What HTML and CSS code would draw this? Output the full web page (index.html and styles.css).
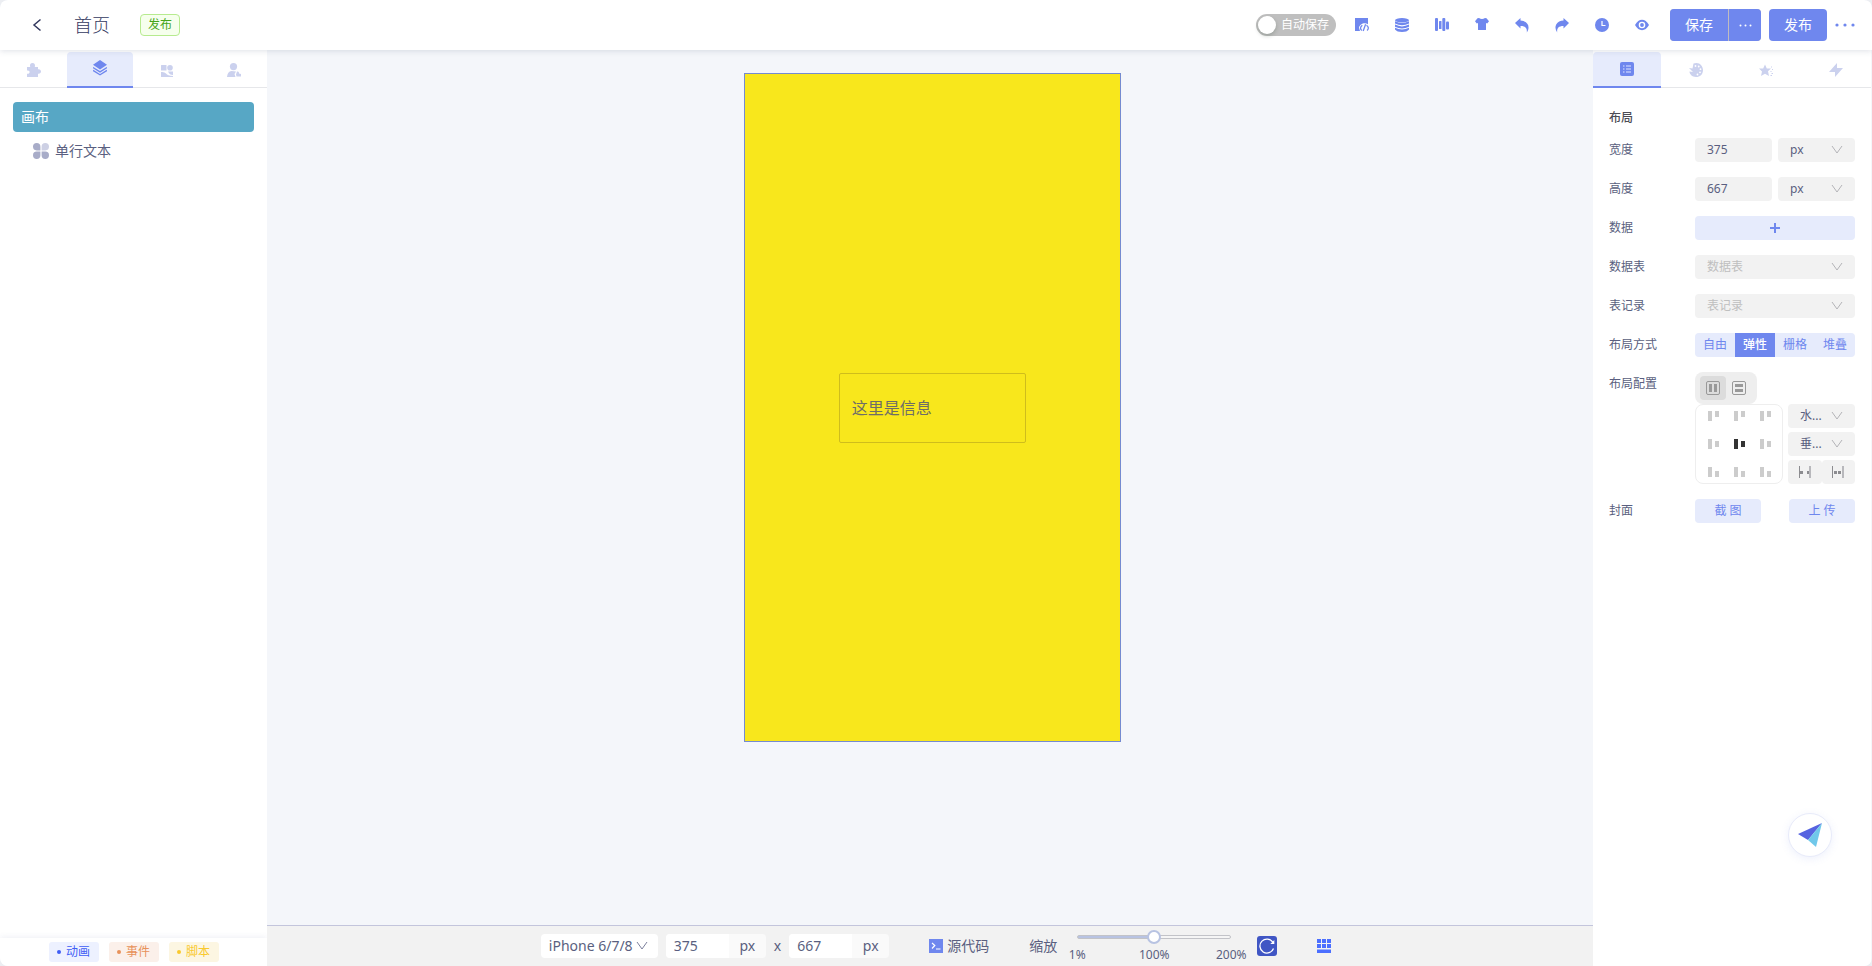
FILE: index.html
```html
<!DOCTYPE html>
<html lang="zh-CN">
<head>
<meta charset="utf-8">
<title>首页</title>
<link rel="stylesheet" href="styles.css">
</head>
<body>
<svg class="defs" aria-hidden="true">
  <symbol id="chevron" viewBox="0 0 12 12"><path d="M1 2 6 9l5-7" fill="none" stroke="currentColor"/></symbol>
</svg>
<div class="app">
  <header class="topbar">
    <button class="plain back" aria-label="返回"><svg width="10" height="14" viewBox="0 0 10 14"><path d="M8.500 1.500 2 7l6.500 5.500" fill="none" stroke="currentColor" stroke-width="1.500"/></svg></button>
    <h1 class="title">首页</h1>
    <span class="badge">发布</span>
    <div class="tools">
      <label class="switch"><input type="checkbox" role="switch"><span>自动保存</span></label>
      <button class="plain" aria-label="页面代码"><svg class="ico" viewBox="0 0 14 14"><path d="M0 0h13v6.200C9.500 4 4.500 6 4 9.800L5 13H0z"/><path d="M7.300 7.300Q4 10 6.800 12.600M10.600 6.300 8.200 13M11.500 7.300q3.400 2.500.6 5.200" fill="none" stroke="currentColor" stroke-width="1.300"/></svg></button>
      <button class="plain" aria-label="数据库"><svg class="ico" viewBox="0 0 14 14"><ellipse cx="7" cy="2.200" rx="7" ry="2.200"/><path d="M0 3.300q7 3.600 14 0v2.200q-7 3.600-14 0zM0 6.600q7 3.600 14 0v2.100q-7 3.600-14 0zM0 9.800q7 3.600 14 0v1.700q-2 2.500-7 2.500t-7-2.500z"/></svg></button>
      <button class="plain" aria-label="变量"><svg class="ico" viewBox="0 0 14 14"><rect width="3" height="13" rx="1"/><rect x="4" y="3" width="2.500" height="8" rx=".6"/><rect x="7.300" y="0" width="3" height="13" rx="1"/><rect x="11" y="3.500" width="3" height="8" rx="1"/></svg></button>
      <button class="plain" aria-label="主题"><svg class="ico" viewBox="0 0 14 14"><path d="M4 0q3 2 6 0l1.500.3L14 3.200 12.200 5.500 11 5v6.500q0 .5-.6.500H3.600q-.6 0-.6-.5V5l-1.200.5L0 3.200 2.500.3z"/></svg></button>
      <button class="plain" aria-label="撤销"><svg class="ico" viewBox="0 0 14 14"><path d="M0 5 5.500 0v2.600C12 3 16 8 11.800 14.500c.5-4.500-1.500-6.500-6.300-6.500v2.500z"/></svg></button>
      <button class="plain" aria-label="重做"><svg class="ico" viewBox="0 0 14 14"><path d="M14 5 8.500 0v2.600C2 3-2 8 2.200 14.500 1.700 10 3.700 8 8.500 8v2.500z"/></svg></button>
      <button class="plain" aria-label="历史"><svg class="ico" viewBox="0 0 14 14"><circle cx="7" cy="7" r="7"/><path d="M7 3v4.500h3.500" fill="none" stroke="#fff" stroke-width="1.200"/></svg></button>
      <button class="plain" aria-label="预览"><svg class="ico" viewBox="0 0 14 14"><path d="M0 7Q3 1.800 7 1.800T14 7Q11 12.200 7 12.200T0 7z"/><circle cx="7" cy="7" r="2.600" fill="none" stroke="#fff" stroke-width="1.400"/></svg></button>
    </div>
    <div class="actions">
      <div class="split"><button class="primary">保存</button><button class="primary more" aria-label="更多保存方式"><svg width="13" height="3" viewBox="0 0 13 3"><circle cx="1.500" cy="1.500" r="1"/><circle cx="6.500" cy="1.500" r="1"/><circle cx="11.500" cy="1.500" r="1"/></svg></button></div>
      <button class="primary">发布</button>
      <button class="plain" aria-label="更多"><svg width="20" height="4" viewBox="0 0 20 4"><circle cx="2" cy="2" r="1.600"/><circle cx="10" cy="2" r="1.600"/><circle cx="18" cy="2" r="1.600"/></svg></button>
    </div>
  </header>

  <aside class="side">
    <nav class="tabs">
      <button class="tab" aria-label="组件"><svg class="ico" viewBox="0 0 14 14"><path d="M0 4h3.200C2.400 1.500 3.700 0 5.500 0s3.100 1.500 2.300 4H11v2.300c1.800-.4 3 .8 3 2.200s-1.200 2.600-3 2.200V14H0v-3.300c3.500.6 3.500-4 0-3.200z"/></svg></button>
      <button class="tab active" aria-label="图层"><svg width="14" height="16" viewBox="0 0 14 16"><path d="M7 0l7 4.700-7 4.700L0 4.700z"/><path d="M0 7.600l7 4.300 7-4.300M0 10.400l7 4.300 7-4.300" fill="none" stroke="currentColor" stroke-width="1.300"/></svg></button>
      <button class="tab" aria-label="素材"><svg class="ico" viewBox="0 0 14 14"><rect x="1" y="2" width="5.500" height="5.500" rx=".5"/><circle cx="10" cy="4.700" r="2.800"/><path d="M1 9q3.500-.5 5 1.500T13 13v1H1zM8 8.500h5v3.500Q9.500 12 8 8.500z"/></svg></button>
      <button class="tab" aria-label="用户"><svg class="ico" viewBox="0 0 14 14"><circle cx="6.500" cy="3.600" r="3.600"/><path d="M0 14Q.5 8.500 4.500 8L9 8.500 7.500 11l1 3zM10 8.500q2.300-.5 2 2l2 .5v2.500h-4.500l-.5-2z"/></svg></button>
    </nav>
    <ul class="tree">
      <li><button class="node root">画布</button></li>
      <li><button class="node child"><svg width="16" height="16" viewBox="0 0 16 16"><path d="M3.700 0A3.700 3.700 0 1 0 3.700 7.400H7.400V3.700A3.700 3.700 0 0 0 3.700 0zM3.700 8.600a3.700 3.700 0 1 0 3.700 3.700V8.600zM8.600 8.600v3.700a3.700 3.700 0 1 0 3.700-3.700z" fill="#a8acc8"/><path d="M12.300 0a3.700 3.700 0 0 0-3.700 3.700v3.700h3.700a3.700 3.700 0 1 0 0-7.400z" fill="#cdd0e4"/></svg>单行文本</button></li>
    </ul>
    <footer class="tags"><span class="tag anim">动画</span><span class="tag event">事件</span><span class="tag script">脚本</span></footer>
  </aside>

  <main class="stage">
    <div class="viewport"><div class="phone"><div class="textbox">这里是信息</div></div></div>
    <footer class="status">
      <div class="select device"><select aria-label="设备"><option>iPhone 6/7/8</option></select><svg><use href="#chevron"/></svg></div>
      <div class="dims">
        <label class="unit"><input type="text" value="375" aria-label="画布宽度"><span>px</span></label>
        <span>x</span>
        <label class="unit"><input type="text" value="667" aria-label="画布高度"><span>px</span></label>
      </div>
      <button class="plain source"><svg width="14" height="14" viewBox="0 0 14 14"><rect width="14" height="14" fill="#6f87ee"/><path d="M3 4l2.800 2.500L3 9.500M7 10h4.500" fill="none" stroke="#fff" stroke-width="1.200"/></svg>源代码</button>
      <div class="zoom">
        <label for="zoom">缩放</label>
        <div class="slider"><input id="zoom" type="range" min="1" max="200" value="100"><div class="marks"><span>1%</span><span>100%</span><span>200%</span></div></div>
      </div>
      <button class="plain reset" aria-label="重置缩放"><svg width="20" height="20" viewBox="0 0 20 20"><rect width="20" height="20" rx="3" fill="#4056c4"/><path d="M15.800 6.200A7 7 0 1 0 16.500 12.500" fill="none" stroke="#fff" stroke-width="1.300"/><path d="M17.300 4v4h-4z" fill="#fff"/></svg></button>
      <button class="plain grid" aria-label="网格"><svg width="14" height="14" viewBox="0 0 14 14"><path d="M0 0h4v4H0zM5 0h4v4H5zM10 0h4v4h-4zM0 5h4v4H0zM5 5h4v4H5zM10 5h4v4h-4zM0 10.500h14V14H0z"/></svg></button>
    </footer>
  </main>

  <aside class="props">
    <nav class="tabs">
      <button class="tab active" aria-label="属性"><svg class="ico" viewBox="0 0 14 14"><rect width="14" height="14" rx="2"/><path d="M3 4h1.500M3 7h1.500M3 10h1.500M6 4h5M6 7h5M6 10h5" stroke="#dfe5ff" stroke-width="1.100"/></svg></button>
      <button class="tab" aria-label="样式"><svg class="ico" viewBox="0 0 14 14"><path d="M4.500.5C10-1.500 14 2.500 14 7s-3 7-7 7-6.500-3-6.500-5.500L4 9 0 5l3.500.5z"/><g fill="#fff"><circle cx="6.500" cy="3" r=".9"/><circle cx="9.700" cy="3.500" r=".9"/><circle cx="11.500" cy="6.200" r=".9"/><circle cx="11" cy="9.300" r=".9"/><circle cx="8.500" cy="11.500" r=".9"/></g></svg></button>
      <button class="tab" aria-label="动画"><svg class="ico" viewBox="0 0 14 14"><path d="M6 1.500l1.800 4H12L9 8.300l1 4.700-4-2.300L2 13l1-4.500L0 5.500h4.200z"/><path d="M12 4h1M13 6.500h1M11.500 8.500h1M12.500 10.500H14M11.500 12.500H13" stroke="currentColor"/></svg></button>
      <button class="tab" aria-label="事件"><svg class="ico" viewBox="0 0 14 14"><path d="M8 0v5h6L6 14V9H0z"/></svg></button>
    </nav>
    <form class="form">
      <h2>布局</h2>
      <div class="row"><label for="w">宽度</label><div class="pair"><input id="w" class="field" type="text" value="375"><div class="select"><select aria-label="宽度单位"><option>px</option></select><svg><use href="#chevron"/></svg></div></div></div>
      <div class="row"><label for="h">高度</label><div class="pair"><input id="h" class="field" type="text" value="667"><div class="select"><select aria-label="高度单位"><option>px</option></select><svg><use href="#chevron"/></svg></div></div></div>
      <div class="row"><span>数据</span><button type="button" class="soft" aria-label="添加数据"><svg width="10" height="10" viewBox="0 0 10 10"><path d="M5 0v10M0 5h10" stroke="currentColor" stroke-width="2"/></svg></button></div>
      <div class="row"><label for="table">数据表</label><div class="select empty"><select id="table"><option>数据表</option></select><svg><use href="#chevron"/></svg></div></div>
      <div class="row"><label for="record">表记录</label><div class="select empty"><select id="record"><option>表记录</option></select><svg><use href="#chevron"/></svg></div></div>
      <div class="row"><span>布局方式</span><div class="segments"><button type="button">自由</button><button type="button" class="on">弹性</button><button type="button">栅格</button><button type="button">堆叠</button></div></div>
      <div class="row"><span>布局配置</span>
        <div class="config">
          <div class="direction">
            <button type="button" class="on" aria-label="横向"><svg width="14" height="14" viewBox="0 0 14 14"><rect x=".5" y=".5" width="13" height="13" rx="1.500"/><path d="M3 3h3v8H3zM8 3h3v8H8z"/></svg></button>
            <button type="button" aria-label="纵向"><svg width="14" height="14" viewBox="0 0 14 14"><rect x=".5" y=".5" width="13" height="13" rx="1.500"/><path d="M3 3h8v3H3zM3 8h8v3H3z"/></svg></button>
          </div>
          <div class="align">
            <div class="matrix">
              <button type="button" class="top" aria-label="左上"><i></i><i></i></button><button type="button" class="top" aria-label="上"><i></i><i></i></button><button type="button" class="top" aria-label="右上"><i></i><i></i></button>
              <button type="button" aria-label="左"><i></i><i></i></button><button type="button" class="on" aria-label="居中"><i></i><i></i></button><button type="button" aria-label="右"><i></i><i></i></button>
              <button type="button" class="bottom" aria-label="左下"><i></i><i></i></button><button type="button" class="bottom" aria-label="下"><i></i><i></i></button><button type="button" class="bottom" aria-label="右下"><i></i><i></i></button>
            </div>
            <div class="stack">
              <div class="select"><select aria-label="水平对齐"><option>水...</option></select><svg><use href="#chevron"/></svg></div>
              <div class="select"><select aria-label="垂直对齐"><option>垂...</option></select><svg><use href="#chevron"/></svg></div>
              <div class="spread">
                <button type="button" aria-label="两端分布"><svg width="12" height="12" viewBox="0 0 12 12"><path d="M0 0h1v12H0zM1 5h3v3H1zM8 5h3v3H8z" fill="#8c8c90"/><path d="M10 0h2v12h-2z" fill="#b8b8bc"/></svg></button>
                <button type="button" aria-label="平均分布"><svg width="12" height="12" viewBox="0 0 12 12"><path d="M0 0h1v12H0zM2 5h3v3H2zM6 5h3v3H6z" fill="#8c8c90"/><path d="M10 0h2v12h-2z" fill="#b8b8bc"/></svg></button>
              </div>
            </div>
          </div>
        </div>
      </div>
      <div class="row"><span>封面</span><div class="cover"><button type="button" class="soft">截 图</button><button type="button" class="soft">上 传</button></div></div>
    </form>
    <button class="assistant" aria-label="助手"><svg width="24" height="24" viewBox="0 0 24 24"><path d="M24 0 0 11l10 6z" fill="#5663e0"/><path d="M24 0 10 17l8 7z" fill="#70c8ea"/></svg></button>
  </aside>
</div>
</body>
</html>
```
FILE: styles.css
```css
* { box-sizing: border-box; }

body {
  margin: 0;
  background: #eceef2;
  color: #5a5f80;
  font: 12px/20px "Noto Sans", "Noto Sans CJK SC", sans-serif;
}

button, input, select { font: inherit; color: inherit; border: 0; margin: 0; padding: 0; background: none; }
button { display: flex; align-items: center; justify-content: center; cursor: pointer; }
select { appearance: none; width: 100%; }
input { min-width: 0; }
svg { display: block; fill: currentColor; flex: none; }
h1, h2, ul { margin: 0; padding: 0; list-style: none; }
.defs { display: none; }
.ico { width: 14px; height: 14px; overflow: visible; }

.app {
  display: grid;
  grid-template: 50px 1fr / 267px 1fr 278px;
  height: 100vh;
  padding-right: 1px;
  border-radius: 8px;
  overflow: hidden;
  background: #f4f6fa;
}

.topbar {
  grid-column: 1 / -1;
  display: flex;
  align-items: center;
  margin-right: -1px;
  padding: 0 17px 0 32px;
  background: #fff;
  box-shadow: 0 1px 6px rgba(80, 90, 120, .18);
  z-index: 1;
}
.back { color: #33395f; }
.title { margin-left: 32px; font-size: 18px; font-weight: 300; color: #33395f; }
.badge {
  margin-left: 30px;
  padding: 0 7px;
  border: 1px solid #b7eb8f;
  border-radius: 4px;
  background: #f6ffed;
  color: #45a51a;
}
.tools { display: flex; align-items: center; gap: 26px; margin-left: auto; color: #6f87ee; }
.switch {
  position: relative;
  width: 80px;
  height: 22px;
  margin-right: -7px;
  padding-left: 25px;
  border-radius: 11px;
  background: #bfbfbf;
  color: #fff;
  line-height: 22px;
}
.switch input {
  appearance: none;
  position: absolute;
  top: 2px;
  left: 2px;
  width: 18px;
  height: 18px;
  border-radius: 50%;
  background: #fff;
  box-shadow: 0 2px 4px rgba(0, 35, 11, .2);
}
.actions { display: flex; align-items: center; gap: 8px; margin-left: 21px; color: #6f87ee; }
.split { display: flex; gap: 1px; background: #c0bcc0; border-radius: 4px; overflow: hidden; }
.primary { width: 58px; height: 32px; border-radius: 4px; background: #6f87ee; color: #fff; font-size: 14px; }
.split .primary { border-radius: 0; }
.split .more { width: 32px; }

.side, .props { display: flex; flex-direction: column; background: #fff; min-height: 0; }
.tabs { display: grid; grid-template-columns: 67px 66px 1fr 1fr; height: 38px; padding-top: 2px; border-bottom: 1px solid #e6e7ea; }
.props .tabs { grid-template-columns: 68px 1fr 1fr 1fr; }
.tab { height: 36px; color: #cbd1ee; }
.tab.active {
  border-bottom: 2px solid #6f87ee;
  border-radius: 4px 4px 0 0;
  background: #e6ebfc;
  color: #6f87ee;
  padding-bottom: 2px;
}
.props .tab.active { padding-bottom: 0; }

.tree { flex: 1; padding: 14px 13px; font-size: 14px; }
.node { width: 100%; height: 30px; justify-content: flex-start; gap: 6px; border-radius: 4px; }
.root { padding-left: 8px; background: #57a7c5; color: #fff; }
.child { margin-top: 4px; padding-left: 20px; }
.tags {
  display: flex;
  justify-content: center;
  gap: 10px;
  padding: 4px 0;
  box-shadow: 0 -1px 6px rgba(80, 90, 160, .09);
}
.tag { display: flex; align-items: center; justify-content: center; gap: 5px; width: 50px; border-radius: 3px; }
.tag::before { content: ""; width: 4px; height: 4px; border-radius: 50%; background: currentColor; }
.anim { background: #edf1ff; color: #3f5ef5; }
.event { background: #fbf0ea; color: #e8925a; }
.script { background: #fcf6e2; color: #f9c92d; }

.stage { display: flex; flex-direction: column; min-width: 0; }
.viewport { flex: 1; display: flex; justify-content: center; align-items: flex-start; padding: 23px 0 0 5px; }
.phone {
  display: flex;
  align-items: center;
  justify-content: center;
  box-sizing: content-box;
  width: 375px;
  height: 667px;
  border: 1px solid #758bd0;
  background: #f8e71c;
}
.textbox {
  width: 50%;
  padding: 22px 12px;
  border: 1px solid #cfbd1c;
  border-radius: 2px;
  font-size: 16px;
  line-height: 24px;
  color: #6e6d68;
}

.status {
  display: flex;
  align-items: center;
  justify-content: center;
  height: 41px;
  padding: 0 0 0 12px;
  border-top: 1px solid #c3c5dc;
  background: #f2f2f2;
  font-size: 14px;
}
.select { display: grid; align-items: center; border-radius: 4px; background: #f2f2f2; }
.select > * { grid-area: 1 / 1; }
.select select { height: 24px; padding-left: 12px; }
.select svg { justify-self: end; width: 12px; height: 12px; margin-right: 12px; color: #b4b4b8; pointer-events: none; }
.select.empty { color: #bfbfbf; }
.select.device { width: 117px; margin-right: 8px; background: #fff; }
.device select { padding-left: 8px; }
.device svg { margin-right: 10px; color: #7d819d; }
.dims { display: flex; align-items: center; gap: 8px; }
.unit { display: flex; height: 24px; width: 100px; border-radius: 4px; overflow: hidden; background: #fafafa; line-height: 24px; }
.unit input { flex: 1; padding-left: 8px; background: #fff; }
.unit span { width: 37px; text-align: center; }
.source { gap: 4px; margin-left: 40px; font-size: 14px; }
.zoom { display: flex; align-items: center; margin-left: 40px; }
.slider { width: 154px; margin: 0 26px 0 20px; font-size: 12px; }
.slider input {
  appearance: none;
  display: block;
  width: 100%;
  height: 4px;
  margin: 8px 0 6px;
  border: 1px solid #c2c3c8;
  border-radius: 2px;
  background: linear-gradient(to right, #b8c3e2 50%, #f5f5f5 50%) border-box;
}
.slider input::-webkit-slider-thumb {
  appearance: none;
  width: 14px;
  height: 14px;
  border: 2px solid #b8c3e2;
  border-radius: 50%;
  background: #fff;
}
.marks { display: flex; justify-content: space-between; margin: 0 -20px; }
.marks span { width: 40px; text-align: center; }
.grid { margin-left: 40px; color: #4c6fff; }

.form { padding: 20px 16px; }
.form h2 { font-size: 12px; font-weight: 500; line-height: 20px; color: #4c4c55; margin-bottom: 10px; }
.row { display: grid; grid-template-columns: 86px 1fr; line-height: 24px; margin-bottom: 15px; }
.pair { display: grid; grid-template-columns: 1fr 1fr; gap: 6px; }
.field { height: 24px; padding-left: 12px; border-radius: 4px; background: #f2f2f2; }
.soft { height: 24px; border-radius: 4px; background: #e6ebfc; color: #6f87ee; }
.segments { display: flex; border-radius: 4px; overflow: hidden; background: #e6ebfc; color: #6f87ee; }
.segments button { flex: 1; }
.segments .on { background: #6f87ee; color: #fff; font-weight: 500; }
.direction { display: flex; width: 62px; padding: 4px 5px; border-radius: 8px; background: #eee; color: #999; }
.direction button { width: 26px; height: 24px; border-radius: 4px; }
.direction .on { background: #dcdcdc; }
.direction rect { fill: none; stroke: currentColor; }
.align { display: flex; justify-content: space-between; }
.matrix {
  display: grid;
  grid-template: repeat(3, 28px) / repeat(3, 26px);
  place-content: center;
  width: 88px;
  height: 80px;
  border: 1px solid #eee;
  border-radius: 8px;
}
.matrix button { gap: 3px; color: #ccc; }
.matrix i { width: 4px; height: 6px; background: currentColor; }
.matrix i:first-child { height: 10px; }
.matrix .top, .matrix .bottom { height: 10px; align-self: center; }
.matrix .top { align-items: flex-start; }
.matrix .bottom { align-items: flex-end; }
.matrix .on { color: #333; }
.stack { display: flex; flex-direction: column; justify-content: space-between; width: 67px; }
.spread { display: grid; grid-template-columns: 1fr 1fr; }
.spread button { height: 24px; border-radius: 4px; background: #f2f2f2; }
.cover { display: flex; justify-content: space-between; }
.cover .soft { width: 66px; }
.assistant {
  align-self: flex-end;
  width: 44px;
  height: 44px;
  margin: auto 39px 109px 0;
  border: 1px solid #e8ebfa;
  border-radius: 50%;
  background: #fff;
  box-shadow: 0 2px 8px rgba(110, 130, 230, .12);
}
```
